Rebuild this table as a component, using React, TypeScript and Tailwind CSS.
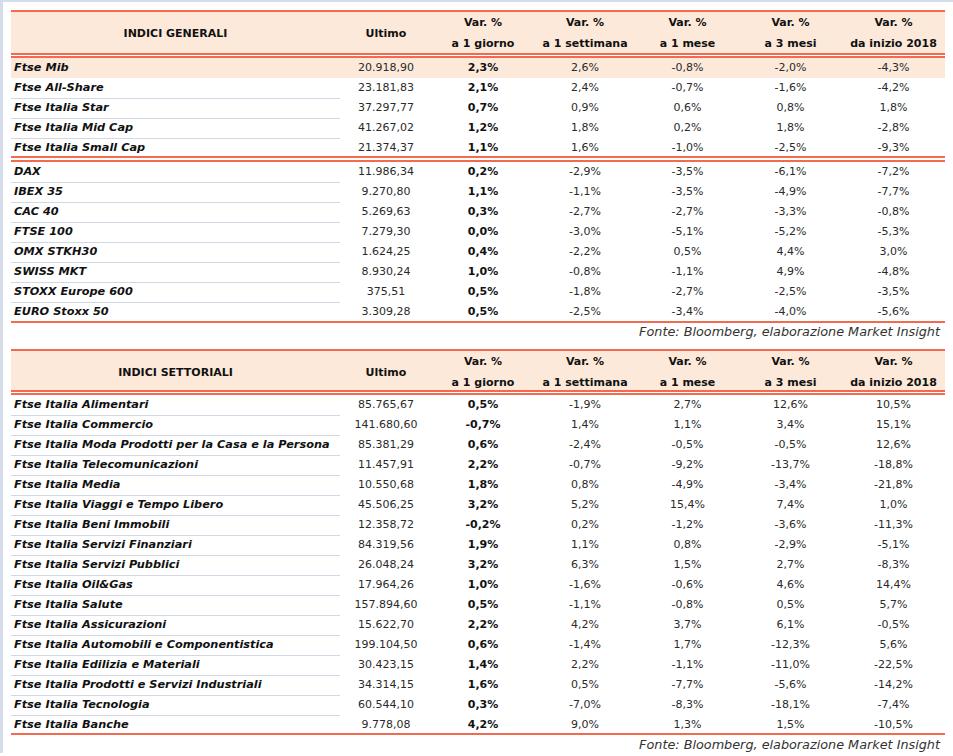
import React from "react";

type Row = [string, string, string, string, string, string, string];

const t1a: Row[] = [
  ["Ftse Mib", "20.918,90", "2,3%", "2,6%", "-0,8%", "-2,0%", "-4,3%"],
  ["Ftse All-Share", "23.181,83", "2,1%", "2,4%", "-0,7%", "-1,6%", "-4,2%"],
  ["Ftse Italia Star", "37.297,77", "0,7%", "0,9%", "0,6%", "0,8%", "1,8%"],
  ["Ftse Italia Mid Cap", "41.267,02", "1,2%", "1,8%", "0,2%", "1,8%", "-2,8%"],
  ["Ftse Italia Small Cap", "21.374,37", "1,1%", "1,6%", "-1,0%", "-2,5%", "-9,3%"],
];

const t1b: Row[] = [
  ["DAX", "11.986,34", "0,2%", "-2,9%", "-3,5%", "-6,1%", "-7,2%"],
  ["IBEX 35", "9.270,80", "1,1%", "-1,1%", "-3,5%", "-4,9%", "-7,7%"],
  ["CAC 40", "5.269,63", "0,3%", "-2,7%", "-2,7%", "-3,3%", "-0,8%"],
  ["FTSE 100", "7.279,30", "0,0%", "-3,0%", "-5,1%", "-5,2%", "-5,3%"],
  ["OMX STKH30", "1.624,25", "0,4%", "-2,2%", "0,5%", "4,4%", "3,0%"],
  ["SWISS MKT", "8.930,24", "1,0%", "-0,8%", "-1,1%", "4,9%", "-4,8%"],
  ["STOXX Europe 600", "375,51", "0,5%", "-1,8%", "-2,7%", "-2,5%", "-3,5%"],
  ["EURO Stoxx 50", "3.309,28", "0,5%", "-2,5%", "-3,4%", "-4,0%", "-5,6%"],
];

const t2: Row[] = [
  ["Ftse Italia Alimentari", "85.765,67", "0,5%", "-1,9%", "2,7%", "12,6%", "10,5%"],
  ["Ftse Italia Commercio", "141.680,60", "-0,7%", "1,4%", "1,1%", "3,4%", "15,1%"],
  ["Ftse Italia Moda Prodotti per la Casa e la Persona", "85.381,29", "0,6%", "-2,4%", "-0,5%", "-0,5%", "12,6%"],
  ["Ftse Italia Telecomunicazioni", "11.457,91", "2,2%", "-0,7%", "-9,2%", "-13,7%", "-18,8%"],
  ["Ftse Italia Media", "10.550,68", "1,8%", "0,8%", "-4,9%", "-3,4%", "-21,8%"],
  ["Ftse Italia Viaggi e Tempo Libero", "45.506,25", "3,2%", "5,2%", "15,4%", "7,4%", "1,0%"],
  ["Ftse Italia Beni Immobili", "12.358,72", "-0,2%", "0,2%", "-1,2%", "-3,6%", "-11,3%"],
  ["Ftse Italia Servizi Finanziari", "84.319,56", "1,9%", "1,1%", "0,8%", "-2,9%", "-5,1%"],
  ["Ftse Italia Servizi Pubblici", "26.048,24", "3,2%", "6,3%", "1,5%", "2,7%", "-8,3%"],
  ["Ftse Italia Oil&Gas", "17.964,26", "1,0%", "-1,6%", "-0,6%", "4,6%", "14,4%"],
  ["Ftse Italia Salute", "157.894,60", "0,5%", "-1,1%", "-0,8%", "0,5%", "5,7%"],
  ["Ftse Italia Assicurazioni", "15.622,70", "2,2%", "4,2%", "3,7%", "6,1%", "-0,5%"],
  ["Ftse Italia Automobili e Componentistica", "199.104,50", "0,6%", "-1,4%", "1,7%", "-12,3%", "5,6%"],
  ["Ftse Italia Edilizia e Materiali", "30.423,15", "1,4%", "2,2%", "-1,1%", "-11,0%", "-22,5%"],
  ["Ftse Italia Prodotti e Servizi Industriali", "34.314,15", "1,6%", "0,5%", "-7,7%", "-5,6%", "-14,2%"],
  ["Ftse Italia Tecnologia", "60.544,10", "0,3%", "-7,0%", "-8,3%", "-18,1%", "-7,4%"],
  ["Ftse Italia Banche", "9.778,08", "4,2%", "9,0%", "1,3%", "1,5%", "-10,5%"],
];

const GRID = "grid grid-cols-[329px_92px_102px_102px_103px_103px_103px]";

function DataRow({ r, last, hl, h }: { r: Row; last?: boolean; hl?: boolean; h?: string }) {
  const height = h ?? "h-[20px]";
  return (
    <div className={`${GRID} ${height} ${hl ? "bg-[#fde9d9]" : ""} leading-[20px]`}>
      <div
        className={`pl-[3px] font-bold italic text-[11.3px] text-[#111] whitespace-nowrap ${
          !last && !hl ? "border-b border-[#d0d7e5]" : ""
        }`}
      >
        {r[0]}
      </div>
      <div className="text-center text-[#2a2a2a]">{r[1]}</div>
      <div className="text-center font-bold text-[#111]">{r[2]}</div>
      <div className="text-center text-[#2a2a2a]">{r[3]}</div>
      <div className="text-center text-[#2a2a2a]">{r[4]}</div>
      <div className="text-center text-[#2a2a2a]">{r[5]}</div>
      <div className="text-center text-[#2a2a2a]">{r[6]}</div>
    </div>
  );
}

function Header({ title, h }: { title: string; h: string }) {
  const cols = ["a 1 giorno", "a 1 settimana", "a 1 mese", "a 3 mesi", "da inizio 2018"];
  return (
    <div className={`${GRID} ${h} bg-[#fde9d9] font-bold text-[#111] leading-[21px]`}>
      <div className="flex items-center justify-center">{title}</div>
      <div className="flex items-center justify-center">Ultimo</div>
      {cols.map((c) => (
        <div key={c} className="flex flex-col items-center justify-center">
          <span>Var. %</span>
          <span>{c}</span>
        </div>
      ))}
    </div>
  );
}

function Orange() {
  return <div className="h-[2px] bg-[#f26a4f]" />;
}

function Double({ gap }: { gap: string }) {
  return (
    <div>
      <div className="h-[2px] bg-[#f26a4f]" />
      <div className={gap} />
      <div className="h-[2px] bg-[#f26a4f]" />
    </div>
  );
}

export default function App() {
  return (
    <div
      className="w-[953px] h-[753px] bg-white border-l-[3px] border-t-2 border-[#d5dcea] text-[11px]"
      style={{ fontFamily: '"DejaVu Sans", Verdana, sans-serif' }}
    >
      <div className="ml-[8px] mt-[8px] w-[934px]">
        {/* Table 1 */}
        <Orange />
        <Header title="INDICI GENERALI" h="h-[41px]" />
        <Double gap="h-[1px]" />
        {t1a.map((r, i) => (
          <DataRow
            key={r[0]}
            r={r}
            hl={i === 0}
            last={i === t1a.length - 1}
            h={i === t1a.length - 1 ? "h-[18px]" : undefined}
          />
        ))}
        <Double gap="h-[2px]" />
        {t1b.map((r, i) => (
          <DataRow
            key={r[0]}
            r={r}
            last={i === t1b.length - 1}
            h={i === t1b.length - 1 ? "h-[19px]" : undefined}
          />
        ))}
        <Orange />
        <div className="h-[26px] text-right pr-[5px] italic text-[12.8px] text-[#333] leading-[18px]">
          Fonte: Bloomberg, elaborazione Market Insight
        </div>

        {/* Table 2 */}
        <Orange />
        <Header title="INDICI SETTORIALI" h="h-[39px]" />
        <Double gap="h-[1px]" />
        {t2.map((r, i) => (
          <DataRow
            key={r[0]}
            r={r}
            last={i === t2.length - 1}
            h={i === t2.length - 1 ? "h-[18px]" : undefined}
          />
        ))}
        <Orange />
        <div className="h-[20px] text-right pr-[5px] italic text-[12.8px] text-[#333] leading-[20px]">
          Fonte: Bloomberg, elaborazione Market Insight
        </div>
      </div>
    </div>
  );
}
